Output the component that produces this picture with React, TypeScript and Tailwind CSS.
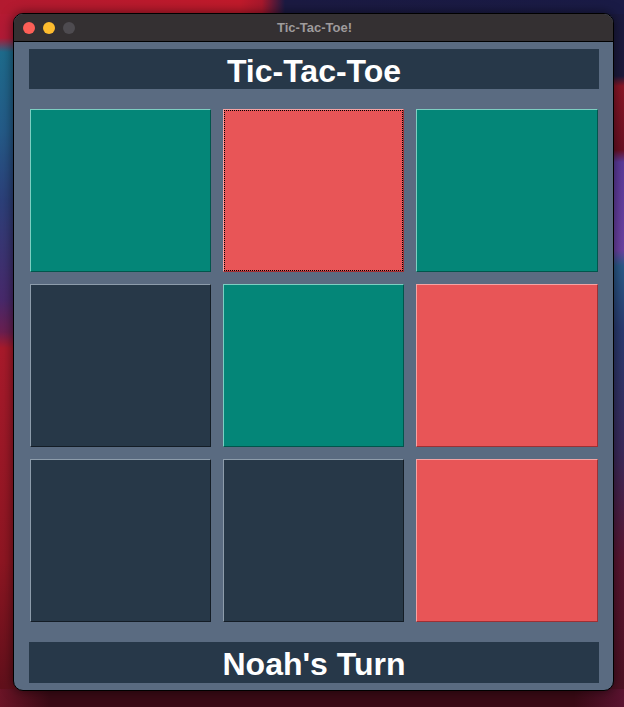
import React from "react";

type C = "t" | "r" | "d";
const board: C[] = ["t", "r", "t", "d", "t", "r", "d", "d", "r"];

const cellCls: Record<C, string> = {
  t: "bg-[#048678] border-t-[#7ccfc2] border-l-[#7ccfc2] border-b-[#01564c] border-r-[#01564c]",
  r: "bg-[#e85557] border-t-[#f6a3a3] border-l-[#f6a3a3] border-b-[#9e3034] border-r-[#9e3034]",
  d: "bg-[#273848] border-t-[#8d9cab] border-l-[#8d9cab] border-b-[#141d26] border-r-[#141d26]",
};

export default function App() {
  return (
    <div
      className="w-[624px] h-[707px] overflow-hidden pt-[13px] pl-[13px] [background:linear-gradient(90deg,#b31a30_0px,#c01a2b_240px,#a8182c_262px,#1b1a42_285px,#1a1b46_624px)_top/100%_14px_no-repeat,linear-gradient(90deg,#6a1426,#3a0a15_8%,#3a0a15_92%,#5a1330)_bottom/100%_18px_no-repeat,linear-gradient(180deg,#b81a30_0px,#b01a36_38px,#1e6b8c_52px,#245b88_130px,#2c4079_200px,#48296b_300px,#6a1f50_332px,#a81a2b_348px,#8e1622_560px,#5a0f1a_707px)_left_top/50%_100%_no-repeat,linear-gradient(180deg,#1a1a40_0px,#1c1a3c_76px,#8a1626_86px,#6a1023_150px,#5b3b9b_162px,#6b41a2_250px,#2a5b89_266px,#2a3b70_330px,#3a2a5b_450px,#5a1530_560px,#4a1020_707px)_right_top/50%_100%_no-repeat]"
      style={{ fontFamily: '"Liberation Sans", Arial, sans-serif' }}
    >
      <div className="w-[601px] h-[678px] rounded-[10px] border border-black bg-[#5a6b81] overflow-hidden shadow-[0_0_12px_rgba(0,0,0,0.55)] flex flex-col">
        <div className="h-[28px] shrink-0 bg-[#343032] border-b border-black flex items-center relative">
          <div className="flex items-center gap-[8px] pl-[9px]">
            <span className="w-[12px] h-[12px] rounded-full bg-[#fe5f57]" />
            <span className="w-[12px] h-[12px] rounded-full bg-[#febc2e]" />
            <span className="w-[12px] h-[12px] rounded-full bg-[#4e4b50]" />
          </div>
          <div className="absolute inset-0 flex items-center justify-center text-[13px] font-bold text-[#9f9b9c] pl-[2px]">
            Tic-Tac-Toe!
          </div>
        </div>
        <div className="flex flex-col pl-[15px] pt-[7px]">
          <div className="w-[570px] h-[40px] pt-[3px] bg-[#273849] flex items-center justify-center text-white font-bold text-[32px] leading-none">
            Tic-Tac-Toe
          </div>
          <div className="mt-[20px] ml-[1px] grid grid-cols-[181px_181px_182px] grid-rows-[163px_163px_163px] gap-x-[12px] gap-y-[12px]">
            {board.map((c, i) => (
              <div
                key={i}
                className={`border ${cellCls[c]} ${i === 1 ? "outline-1 outline-dotted outline-black -outline-offset-2" : ""}`}
              />
            ))}
          </div>
          <div className="mt-[20px] w-[570px] h-[41px] pt-[2px] bg-[#273849] flex items-center justify-center text-white font-bold text-[32px] leading-none">
            Noah's Turn
          </div>
        </div>
      </div>
    </div>
  );
}
